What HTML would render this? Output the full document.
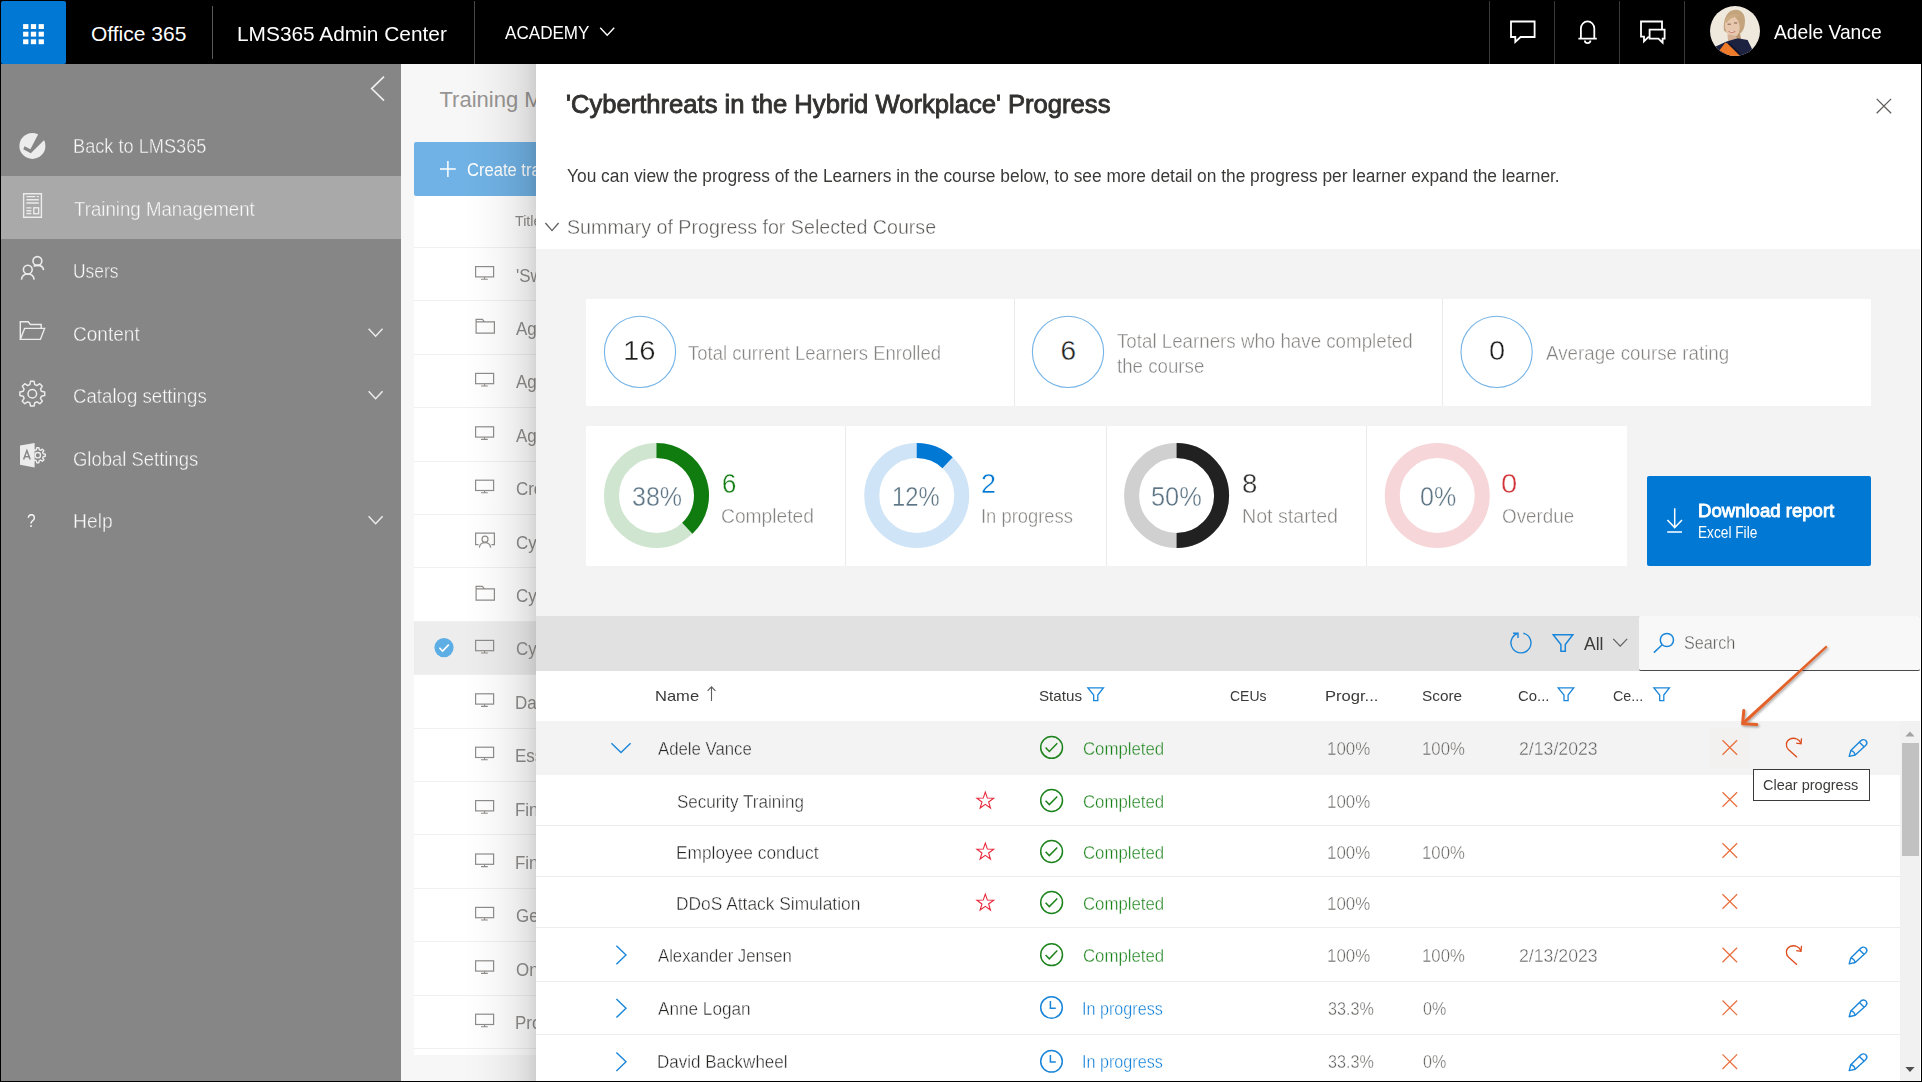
<!DOCTYPE html>
<html><head><meta charset="utf-8"><title>LMS365 Admin Center - Progress</title>
<style>
*{box-sizing:border-box}
html,body{margin:0;padding:0;background:#000;overflow:hidden}
#root{position:absolute;left:0;top:0;width:1922px;height:1082px;overflow:hidden;background:#000;font-family:"Liberation Sans",sans-serif}
#root div,#root span,#root svg{position:absolute}
.t{white-space:pre;line-height:1;transform-origin:0 0}
svg{left:0;top:0;width:1922px;height:1082px;overflow:visible}
</style></head>
<body><div id="root">
<!-- top bar -->
<div style="left:0px;top:0px;width:1922px;height:64px;background:#000;"></div>
<div style="left:1px;top:1px;width:65px;height:63px;background:#0078d4;border-radius:2px"></div>
<!-- sidebar -->
<div style="left:1px;top:64px;width:400px;height:1017px;background:#868686;"></div>
<div style="left:1px;top:176px;width:400px;height:63px;background:#a9a9a9;"></div>
<!-- background page (dimmed, under panel) -->
<div style="left:401px;top:64px;width:1520px;height:1017px;background:#f7f7f7;"></div>
<div style="left:414px;top:196px;width:1507px;height:859px;background:#ffffff;"></div>
<div style="left:414px;top:141.5px;width:1507px;height:54.5px;background:#70b2e5;border-radius:2px 0 0 2px"></div>
<div style="left:414px;top:621px;width:1507px;height:53px;background:#ededed;"></div>
<div style="left:414px;top:247px;width:1507px;height:1px;background:#f0f0f0;"></div>
<div style="left:414px;top:300px;width:1507px;height:1px;background:#f0f0f0;"></div>
<div style="left:414px;top:354px;width:1507px;height:1px;background:#f0f0f0;"></div>
<div style="left:414px;top:407px;width:1507px;height:1px;background:#f0f0f0;"></div>
<div style="left:414px;top:461px;width:1507px;height:1px;background:#f0f0f0;"></div>
<div style="left:414px;top:514px;width:1507px;height:1px;background:#f0f0f0;"></div>
<div style="left:414px;top:567px;width:1507px;height:1px;background:#f0f0f0;"></div>
<div style="left:414px;top:621px;width:1507px;height:1px;background:#f0f0f0;"></div>
<div style="left:414px;top:674px;width:1507px;height:1px;background:#f0f0f0;"></div>
<div style="left:414px;top:728px;width:1507px;height:1px;background:#f0f0f0;"></div>
<div style="left:414px;top:781px;width:1507px;height:1px;background:#f0f0f0;"></div>
<div style="left:414px;top:834px;width:1507px;height:1px;background:#f0f0f0;"></div>
<div style="left:414px;top:888px;width:1507px;height:1px;background:#f0f0f0;"></div>
<div style="left:414px;top:941px;width:1507px;height:1px;background:#f0f0f0;"></div>
<div style="left:414px;top:995px;width:1507px;height:1px;background:#f0f0f0;"></div>
<div style="left:414px;top:1048px;width:1507px;height:1px;background:#f0f0f0;"></div>
<svg viewBox="0 0 1922 1082">
<rect x="23.10" y="24.10" width="5.3" height="4.9" fill="#fff"/>
<rect x="30.85" y="24.10" width="5.3" height="4.9" fill="#fff"/>
<rect x="38.60" y="24.10" width="5.3" height="4.9" fill="#fff"/>
<rect x="23.10" y="31.70" width="5.3" height="4.9" fill="#fff"/>
<rect x="30.85" y="31.70" width="5.3" height="4.9" fill="#fff"/>
<rect x="38.60" y="31.70" width="5.3" height="4.9" fill="#fff"/>
<rect x="23.10" y="39.30" width="5.3" height="4.9" fill="#fff"/>
<rect x="30.85" y="39.30" width="5.3" height="4.9" fill="#fff"/>
<rect x="38.60" y="39.30" width="5.3" height="4.9" fill="#fff"/>
<path d="M212.5,6 V59" stroke="#5a5a5a" stroke-width="1"/>
<path d="M474.5,1 V64" stroke="#484848" stroke-width="1"/>
<path d="M1489.5,1 V64" stroke="#3a3a3a" stroke-width="1"/>
<path d="M1554.5,1 V64" stroke="#3a3a3a" stroke-width="1"/>
<path d="M1619.5,1 V64" stroke="#3a3a3a" stroke-width="1"/>
<path d="M1684.5,1 V64" stroke="#3a3a3a" stroke-width="1"/>
<polyline points="600.2,27.7 607.2,35.2 614.2,27.7" fill="none" stroke="#fff" stroke-width="1.4"/>
<path d="M1511,21.5 H1534.6 V37 H1520.6 L1515.3,42 V37 H1511 Z" fill="none" stroke="#fff" stroke-width="1.8" stroke-linejoin="miter"/>
<path d="M1578.4,38.6 H1596.8 M1580.9,38.6 V28.6 a6.7,7.2 0 0 1 13.4,0 V38.6 M1584.8,40.6 a2.8,2.6 0 0 0 5.6,0" fill="none" stroke="#fff" stroke-width="1.8"/>
<path d="M1662,29 V21.5 H1641 V36.6 H1644 V41.4 L1648.8,36.6" fill="none" stroke="#fff" stroke-width="1.8" stroke-linejoin="miter"/>
<path d="M1649.6,29.6 H1664.6 V38.6 H1662.6 V42.6 L1658.4,38.6 H1649.6 Z" fill="none" stroke="#fff" stroke-width="1.8" stroke-linejoin="miter"/>
<defs><clipPath id="av"><circle cx="25" cy="25.2" r="25"/></clipPath>
<filter id="avb" x="-10%" y="-10%" width="120%" height="120%"><feGaussianBlur stdDeviation="0.75"/></filter></defs>
<g transform="translate(1710,5.8)" clip-path="url(#av)"><rect x="0" y="0" width="50" height="51" fill="#efe8dd"/>
<g filter="url(#avb)">
<path d="M14,25 C12.6,13 17.5,4 25.6,4 C33.2,4 36.2,11 34.6,19.5 C33.8,24 32,27.6 28.6,28.2 L20,29 Z" fill="#c3a47d"/>
<path d="M24,31 L30,27 L31,34 Z" fill="#b9966e"/>
<ellipse cx="22.3" cy="20.6" rx="7.3" ry="10.6" transform="rotate(-10 22.3 20.6)" fill="#e7c8ae"/>
<path d="M15.2,15 C17,8.6 25,6.4 31,10.5 C27,10.2 20.5,11.2 16.4,17.5 Z" fill="#cbab82"/>
<path d="M17.4,28.4 L25.8,30 L27.4,36.5 L18.4,38.5 Z" fill="#d6b296"/>
<path d="M17.6,18.4 h3.2 M24,17.2 h3.2" stroke="#7c5c46" stroke-width="1"/>
<path d="M18.6,25.4 q3.4,2.6 6.6,0" stroke="#c88474" stroke-width="1.1" fill="#f7eee9"/>
<path d="M3,42 L16.6,35.8 L27.6,32.4 L37.6,34.2 L42.4,44 L40,52 L3,52 Z" fill="#1b2140"/>
<path d="M15.4,36.8 L19,38.4 L30.8,49.8 L22,51.6 L9.4,44.6 Z" fill="#ee7a2a"/>
<path d="M18.6,37.6 L31.2,50" stroke="#14152a" stroke-width="1.7"/>
</g></g>
<polyline points="384,76.6 371.6,88.6 384,100.6" fill="none" stroke="#f0f0f0" stroke-width="1.6"/>
<circle cx="32.4" cy="145.9" r="13" fill="#ececec"/>
<polygon points="24.6,146.2 30.4,149.3 39.6,131.6 48,136.2 30.8,153.3 23.3,149.3" fill="#868686"/>
<path d="M23.6,193.8 H41.4 V217.2 H23.6 Z M26.4,196.6 H35.4 M36.8,196.6 H38.8 M26.4,199.8 H38.8 M26.4,203 H38.8 M26.4,207.9 H31.4 M26.4,210.7 H31.4 M26.4,213.5 H31.4" fill="none" stroke="#ececec" stroke-width="1.4"/>
<rect x="33.8" y="207.8" width="4.8" height="5.9" fill="none" stroke="#ececec" stroke-width="1.4"/>
<circle cx="27.8" cy="269.6" r="4.4" fill="none" stroke="#ececec" stroke-width="1.6"/>
<path d="M21.4,279.6 C22,275.6 24.6,274 27.8,274 C31,274 33.6,275.6 34.2,279.6" fill="none" stroke="#ececec" stroke-width="1.6"/>
<circle cx="37.4" cy="261" r="4.4" fill="none" stroke="#ececec" stroke-width="1.6"/>
<path d="M33.6,266.4 C34.8,265.7 36,265.4 37.4,265.4 C40.8,265.4 43.2,267.2 43.6,270.2" fill="none" stroke="#ececec" stroke-width="1.6"/>
<path d="M20.3,339.4 V321.8 H28.2 L30.4,324.5 H41.2 V328.4 M20.3,339.4 L24.6,328.4 H44.6 L40.4,339.4 Z" fill="none" stroke="#ececec" stroke-width="1.4" stroke-linejoin="miter"/>
<polyline points="368.6,328.7 375.6,336.2 382.6,328.7" fill="none" stroke="#ececec" stroke-width="1.5"/>
<polyline points="368.6,391.2 375.6,398.7 382.6,391.2" fill="none" stroke="#ececec" stroke-width="1.5"/>
<polyline points="368.6,516.2 375.6,523.7 382.6,516.2" fill="none" stroke="#ececec" stroke-width="1.5"/>
<path d="M44.68,391.94 L44.68,395.46 L41.36,396.19 L40.47,398.34 L42.30,401.21 L39.81,403.70 L36.94,401.87 L34.79,402.76 L34.06,406.08 L30.54,406.08 L29.81,402.76 L27.66,401.87 L24.79,403.70 L22.30,401.21 L24.13,398.34 L23.24,396.19 L19.92,395.46 L19.92,391.94 L23.24,391.21 L24.13,389.06 L22.30,386.19 L24.79,383.70 L27.66,385.53 L29.81,384.64 L30.54,381.32 L34.06,381.32 L34.79,384.64 L36.94,385.53 L39.81,383.70 L42.30,386.19 L40.47,389.06 L41.36,391.21 Z" fill="none" stroke="#ececec" stroke-width="1.5" stroke-linejoin="round"/>
<circle cx="32.3" cy="393.7" r="4.3" fill="none" stroke="#ececec" stroke-width="1.5"/>
<path d="M45.32,454.13 L45.32,456.27 L43.20,456.69 L42.67,457.97 L43.88,459.76 L42.36,461.28 L40.57,460.07 L39.29,460.60 L38.87,462.72 L36.73,462.72 L36.31,460.60 L35.03,460.07 L33.24,461.28 L31.72,459.76 L32.93,457.97 L32.40,456.69 L30.28,456.27 L30.28,454.13 L32.40,453.71 L32.93,452.43 L31.72,450.64 L33.24,449.12 L35.03,450.33 L36.31,449.80 L36.73,447.68 L38.87,447.68 L39.29,449.80 L40.57,450.33 L42.36,449.12 L43.88,450.64 L42.67,452.43 L43.20,453.71 Z" fill="none" stroke="#ececec" stroke-width="1.4" stroke-linejoin="round"/>
<circle cx="37.8" cy="455.2" r="2.7" fill="none" stroke="#ececec" stroke-width="1.4"/>
<path d="M20,445.6 L34.6,443 V467.6 L20,464.8 Z" fill="#ececec"/>
<path d="M23.6,459.6 L26.9,450.6 L30.2,459.6 M24.8,456.8 H29" fill="none" stroke="#868686" stroke-width="1.5"/>
<path d="M440,169 H455.8 M447.9,161.1 V176.9" stroke="#fff" stroke-width="1.5"/>
<rect x="475.6" y="266.6" width="18" height="10.3" fill="none" stroke="#8f8d8b" stroke-width="1.2"/><path d="M484.6,277.0 V279.1 M481,279.2 H487.8" fill="none" stroke="#8f8d8b" stroke-width="1.1"/>
<path d="M476.1,333.2 V319.4 H482.5 L484.4,321.9 H494.4 V333.2 Z M476.1,321.9 H484" fill="none" stroke="#8f8d8b" stroke-width="1.2"/>
<rect x="475.6" y="373.4" width="18" height="10.3" fill="none" stroke="#8f8d8b" stroke-width="1.2"/><path d="M484.6,383.8 V385.9 M481,386.0 H487.8" fill="none" stroke="#8f8d8b" stroke-width="1.1"/>
<rect x="475.6" y="426.8" width="18" height="10.3" fill="none" stroke="#8f8d8b" stroke-width="1.2"/><path d="M484.6,437.2 V439.3 M481,439.4 H487.8" fill="none" stroke="#8f8d8b" stroke-width="1.1"/>
<rect x="475.6" y="480.2" width="18" height="10.3" fill="none" stroke="#8f8d8b" stroke-width="1.2"/><path d="M484.6,490.6 V492.7 M481,492.8 H487.8" fill="none" stroke="#8f8d8b" stroke-width="1.1"/>
<path d="M478.5,544.6 H475.6 V533.2 H494.4 V544.6 H491.5" fill="none" stroke="#8f8d8b" stroke-width="1.2"/><circle cx="485" cy="539.2" r="3" fill="none" stroke="#8f8d8b" stroke-width="1.2"/><path d="M479.3,547.6 C479.8,544.1 482,542.6 485,542.6 C488,542.6 490.2,544.1 490.7,547.6" fill="none" stroke="#8f8d8b" stroke-width="1.2"/>
<path d="M476.1,600.2 V586.4 H482.5 L484.4,588.9 H494.4 V600.2 Z M476.1,588.9 H484" fill="none" stroke="#8f8d8b" stroke-width="1.2"/>
<rect x="475.6" y="640.4" width="18" height="10.3" fill="none" stroke="#8f8d8b" stroke-width="1.2"/><path d="M484.6,650.8 V652.9 M481,653.0 H487.8" fill="none" stroke="#8f8d8b" stroke-width="1.1"/>
<rect x="475.6" y="693.8" width="18" height="10.3" fill="none" stroke="#8f8d8b" stroke-width="1.2"/><path d="M484.6,704.2 V706.3 M481,706.4 H487.8" fill="none" stroke="#8f8d8b" stroke-width="1.1"/>
<rect x="475.6" y="747.2" width="18" height="10.3" fill="none" stroke="#8f8d8b" stroke-width="1.2"/><path d="M484.6,757.6 V759.7 M481,759.8 H487.8" fill="none" stroke="#8f8d8b" stroke-width="1.1"/>
<rect x="475.6" y="800.6" width="18" height="10.3" fill="none" stroke="#8f8d8b" stroke-width="1.2"/><path d="M484.6,811.0 V813.1 M481,813.2 H487.8" fill="none" stroke="#8f8d8b" stroke-width="1.1"/>
<rect x="475.6" y="854.0" width="18" height="10.3" fill="none" stroke="#8f8d8b" stroke-width="1.2"/><path d="M484.6,864.4 V866.5 M481,866.6 H487.8" fill="none" stroke="#8f8d8b" stroke-width="1.1"/>
<rect x="475.6" y="907.4" width="18" height="10.3" fill="none" stroke="#8f8d8b" stroke-width="1.2"/><path d="M484.6,917.8 V919.9 M481,920.0 H487.8" fill="none" stroke="#8f8d8b" stroke-width="1.1"/>
<rect x="475.6" y="960.8" width="18" height="10.3" fill="none" stroke="#8f8d8b" stroke-width="1.2"/><path d="M484.6,971.2 V973.3 M481,973.4 H487.8" fill="none" stroke="#8f8d8b" stroke-width="1.1"/>
<rect x="475.6" y="1014.2" width="18" height="10.3" fill="none" stroke="#8f8d8b" stroke-width="1.2"/><path d="M484.6,1024.6 V1026.7 M481,1026.8 H487.8" fill="none" stroke="#8f8d8b" stroke-width="1.1"/>
<circle cx="444" cy="647.6" r="9.6" fill="#5eaee6"/>
<polyline points="439.4,647.8 442.6,651 448.8,644.6" fill="none" stroke="#fff" stroke-width="1.6"/>
</svg>
<span class="t" style="left:91.00px;top:23.22px;font-size:21px;color:#ffffff;">Office 365</span>
<span class="t" style="left:237.01px;top:22.97px;font-size:21px;color:#ffffff;transform:scaleX(0.9932);">LMS365 Admin Center</span>
<span class="t" style="left:504.50px;top:23.51px;font-size:18px;color:#ffffff;transform:scaleX(0.9493);">ACADEMY</span>
<span class="t" style="left:1774.00px;top:21.47px;font-size:21px;color:#ffffff;transform:scaleX(0.9157);">Adele Vance</span>
<span class="t" style="left:72.89px;top:135.87px;font-size:20px;color:#fafafa;-webkit-text-stroke:0.4px #868686;transform:scaleX(0.9092);">Back to LMS365</span>
<span class="t" style="left:73.80px;top:199.07px;font-size:20px;color:#fafafa;-webkit-text-stroke:0.4px #a9a9a9;transform:scaleX(0.9328);">Training Management</span>
<span class="t" style="left:72.93px;top:261.07px;font-size:20px;color:#fafafa;-webkit-text-stroke:0.4px #868686;transform:scaleX(0.8706);">Users</span>
<span class="t" style="left:72.85px;top:323.67px;font-size:20px;color:#fafafa;-webkit-text-stroke:0.4px #868686;transform:scaleX(0.9526);">Content</span>
<span class="t" style="left:72.87px;top:386.07px;font-size:20px;color:#fafafa;-webkit-text-stroke:0.4px #868686;transform:scaleX(0.9325);">Catalog settings</span>
<span class="t" style="left:72.88px;top:448.77px;font-size:20px;color:#fafafa;-webkit-text-stroke:0.4px #868686;transform:scaleX(0.9225);">Global Settings</span>
<span class="t" style="left:72.84px;top:510.87px;font-size:20px;color:#fafafa;-webkit-text-stroke:0.4px #868686;transform:scaleX(0.9648);">Help</span>
<span class="t" style="left:27.00px;top:511.76px;font-size:18px;color:#fafafa;transform:scaleX(0.8600);">?</span>
<span class="t" style="left:439.50px;top:89.13px;font-size:22px;color:#979593;">Training Management</span>
<span class="t" style="left:467.00px;top:160.51px;font-size:18px;color:#ffffff;transform:scaleX(0.9200);">Create training</span>
<span class="t" style="left:514.50px;top:213.30px;font-size:15px;color:#8f8d8b;transform:scaleX(0.9500);">Title</span>
<span class="t" style="left:515.75px;top:266.56px;font-size:18px;color:#8f8d8b;transform:scaleX(0.9400);">'Swi</span>
<span class="t" style="left:515.75px;top:319.96px;font-size:18px;color:#8f8d8b;transform:scaleX(0.9400);">Agi</span>
<span class="t" style="left:515.75px;top:373.36px;font-size:18px;color:#8f8d8b;transform:scaleX(0.9400);">Agi</span>
<span class="t" style="left:515.75px;top:426.76px;font-size:18px;color:#8f8d8b;transform:scaleX(0.9400);">Agi</span>
<span class="t" style="left:515.75px;top:480.16px;font-size:18px;color:#8f8d8b;transform:scaleX(0.9400);">Cre</span>
<span class="t" style="left:515.75px;top:533.56px;font-size:18px;color:#8f8d8b;transform:scaleX(0.9400);">Cyb</span>
<span class="t" style="left:515.75px;top:586.96px;font-size:18px;color:#8f8d8b;transform:scaleX(0.9400);">Cyb</span>
<span class="t" style="left:515.75px;top:640.36px;font-size:18px;color:#8f8d8b;transform:scaleX(0.9400);">Cyb</span>
<span class="t" style="left:514.81px;top:693.76px;font-size:18px;color:#8f8d8b;transform:scaleX(0.9400);">Dat</span>
<span class="t" style="left:514.81px;top:747.16px;font-size:18px;color:#8f8d8b;transform:scaleX(0.9400);">Ess</span>
<span class="t" style="left:514.81px;top:800.56px;font-size:18px;color:#8f8d8b;transform:scaleX(0.9400);">Fin</span>
<span class="t" style="left:514.81px;top:853.96px;font-size:18px;color:#8f8d8b;transform:scaleX(0.9400);">Fin</span>
<span class="t" style="left:515.75px;top:907.36px;font-size:18px;color:#8f8d8b;transform:scaleX(0.9400);">Gen</span>
<span class="t" style="left:515.75px;top:960.76px;font-size:18px;color:#8f8d8b;transform:scaleX(0.9400);">Onb</span>
<span class="t" style="left:514.81px;top:1014.16px;font-size:18px;color:#8f8d8b;transform:scaleX(0.9400);">Pro</span>
<!-- progress panel -->
<div style="left:462px;top:64px;width:74px;height:1017px;background:linear-gradient(to right,rgba(0,0,0,0) 0%,rgba(0,0,0,0.012) 25%,rgba(0,0,0,0.035) 50%,rgba(0,0,0,0.07) 72%,rgba(0,0,0,0.11) 88%,rgba(0,0,0,0.165) 100%)"></div>
<div style="left:536px;top:64px;width:1385px;height:1017px;background:#ffffff;"></div>
<div style="left:536px;top:249px;width:1384px;height:367px;background:#f3f3f3;"></div>
<div style="left:586px;top:299px;width:1285px;height:107px;background:#fff;"></div>
<div style="left:1014px;top:299px;width:1px;height:107px;background:#eaeaea;"></div>
<div style="left:1442px;top:299px;width:1px;height:107px;background:#eaeaea;"></div>
<div style="left:586px;top:426px;width:1041px;height:140px;background:#fff;"></div>
<div style="left:845px;top:426px;width:1px;height:140px;background:#eaeaea;"></div>
<div style="left:1106px;top:426px;width:1px;height:140px;background:#eaeaea;"></div>
<div style="left:1366px;top:426px;width:1px;height:140px;background:#eaeaea;"></div>
<div style="left:1647px;top:476px;width:224px;height:90px;background:#0078d4;border-radius:2px"></div>
<div style="left:536px;top:616px;width:1384px;height:55px;background:#e1e1e1;"></div>
<div style="left:1639px;top:616px;width:280.5px;height:55px;background:#f8f8f8;border-bottom:1px solid #4a4a4a;border-radius:2px"></div>
<div style="left:536px;top:721px;width:1364px;height:54px;background:#f3f3f3;"></div>
<div style="left:1710px;top:728px;width:40px;height:40px;background:#f2f1f0;"></div>
<div style="left:536px;top:825px;width:1364px;height:1px;background:#ededed;"></div>
<div style="left:536px;top:876px;width:1364px;height:1px;background:#ededed;"></div>
<div style="left:536px;top:927px;width:1364px;height:1px;background:#ededed;"></div>
<div style="left:536px;top:981px;width:1364px;height:1px;background:#ededed;"></div>
<div style="left:536px;top:1034px;width:1364px;height:1px;background:#ededed;"></div>
<div style="left:1900px;top:721px;width:20px;height:360px;background:#f1f1f1;"></div>
<div style="left:1902px;top:743px;width:17px;height:113px;background:#c1c1c1;"></div>
<svg viewBox="0 0 1922 1082">
<path d="M1876.7,98.9 L1891.1,113.3 M1891.1,98.9 L1876.7,113.3" stroke="#605e5c" stroke-width="1.3"/>
<polyline points="545.4,223 552,230.6 558.6,223" fill="none" stroke="#605e5c" stroke-width="1.3"/>
<circle cx="640" cy="351.9" r="35.6" fill="none" stroke="#74b3e6" stroke-width="1.1"/>
<circle cx="1068" cy="351.9" r="35.6" fill="none" stroke="#74b3e6" stroke-width="1.1"/>
<circle cx="1496.6" cy="351.9" r="35.6" fill="none" stroke="#74b3e6" stroke-width="1.1"/>
<circle cx="656.5" cy="495.5" r="45" fill="none" stroke="#cfe5cf" stroke-width="15"/><path d="M656.5,450.5 A45,45 0 0 1 687.30,528.30" fill="none" stroke="#107c10" stroke-width="15"/>
<circle cx="916.75" cy="495.5" r="45" fill="none" stroke="#cfe4f6" stroke-width="15"/><path d="M916.75,450.5 A45,45 0 0 1 947.55,462.70" fill="none" stroke="#0078d4" stroke-width="15"/>
<circle cx="1176.6" cy="495.5" r="45" fill="none" stroke="#d0d0d0" stroke-width="15"/><path d="M1176.6,450.5 A45,45 0 0 1 1176.60,540.50" fill="none" stroke="#212121" stroke-width="15"/>
<circle cx="1437.25" cy="495.5" r="45" fill="none" stroke="#f6d6d8" stroke-width="15"/>
<path d="M1674.7,508.2 V527.6 M1667.4,520 L1674.7,527.6 L1682,520 M1667.2,532 H1682" fill="none" stroke="#fff" stroke-width="1.5"/>
<path d="M1523.4,633.2 A10,10 0 1 1 1517.5,633.5" fill="none" stroke="#1a86d9" stroke-width="1.4"/>
<polyline points="1513,633.3 1518,633.3 1518,638" fill="none" stroke="#1a86d9" stroke-width="1.4"/>
<path d="M1553.2,634.7 H1572.8 L1565.3,644.5 V651.3 H1560.9 V644.5 Z" fill="none" stroke="#1a86d9" stroke-width="1.5"/>
<polyline points="1613.2,638.9 1620.2,646.2 1627.2,638.9" fill="none" stroke="#605e5c" stroke-width="1.2"/>
<circle cx="1666.9" cy="640" r="6.6" fill="none" stroke="#1a86d9" stroke-width="1.5"/>
<path d="M1662.2,644.8 L1653.9,652.6" stroke="#1a86d9" stroke-width="1.5"/>
<path d="M711.5,686.8 V701 M707.6,690.8 L711.5,686.8 L715.4,690.8" fill="none" stroke="#605e5c" stroke-width="1.1"/>
<path d="M1087.9,687.9 H1103.4 L1097.8,695.0 V700.5999999999999 H1093.7 V695.0 Z" fill="none" stroke="#1a86d9" stroke-width="1.3" stroke-linejoin="miter"/>
<path d="M1558.2,687.9 H1573.7 L1568.1,695.0 V700.5999999999999 H1564.0 V695.0 Z" fill="none" stroke="#1a86d9" stroke-width="1.3" stroke-linejoin="miter"/>
<path d="M1653.9,687.9 H1669.4 L1663.8,695.0 V700.5999999999999 H1659.7 V695.0 Z" fill="none" stroke="#1a86d9" stroke-width="1.3" stroke-linejoin="miter"/>
<polyline points="611.4,743.3 621,752.5 630.6,743.3" fill="none" stroke="#1a86d9" stroke-width="1.4"/>
<polyline points="616.4,945.7 626,955 616.4,964.3" fill="none" stroke="#1a86d9" stroke-width="1.4"/>
<polyline points="616.4,999.0 626,1008.3 616.4,1017.5999999999999" fill="none" stroke="#1a86d9" stroke-width="1.4"/>
<polyline points="616.4,1052.4 626,1061.7 616.4,1071.0" fill="none" stroke="#1a86d9" stroke-width="1.4"/>
<polygon points="985.30,792.10 987.36,798.07 993.67,798.18 988.63,801.98 990.47,808.02 985.30,804.40 980.13,808.02 981.97,801.98 976.93,798.18 983.24,798.07" fill="none" stroke="#e8283a" stroke-width="1.1" stroke-linejoin="miter"/>
<polygon points="985.30,843.10 987.36,849.07 993.67,849.18 988.63,852.98 990.47,859.02 985.30,855.40 980.13,859.02 981.97,852.98 976.93,849.18 983.24,849.07" fill="none" stroke="#e8283a" stroke-width="1.1" stroke-linejoin="miter"/>
<polygon points="985.30,894.10 987.36,900.07 993.67,900.18 988.63,903.98 990.47,910.02 985.30,906.40 980.13,910.02 981.97,903.98 976.93,900.18 983.24,900.07" fill="none" stroke="#e8283a" stroke-width="1.1" stroke-linejoin="miter"/>
<circle cx="1051.6" cy="747.4" r="10.9" fill="none" stroke="#1d831d" stroke-width="1.5"/>
<polyline points="1045.6,747.6 1049.3,751.5 1057.3,743.3" fill="none" stroke="#1d831d" stroke-width="1.5"/>
<circle cx="1051.6" cy="800.5" r="10.9" fill="none" stroke="#1d831d" stroke-width="1.5"/>
<polyline points="1045.6,800.7 1049.3,804.6 1057.3,796.4" fill="none" stroke="#1d831d" stroke-width="1.5"/>
<circle cx="1051.6" cy="851.5" r="10.9" fill="none" stroke="#1d831d" stroke-width="1.5"/>
<polyline points="1045.6,851.7 1049.3,855.6 1057.3,847.4" fill="none" stroke="#1d831d" stroke-width="1.5"/>
<circle cx="1051.6" cy="902.5" r="10.9" fill="none" stroke="#1d831d" stroke-width="1.5"/>
<polyline points="1045.6,902.7 1049.3,906.6 1057.3,898.4" fill="none" stroke="#1d831d" stroke-width="1.5"/>
<circle cx="1051.6" cy="954.7" r="10.9" fill="none" stroke="#1d831d" stroke-width="1.5"/>
<polyline points="1045.6,954.9000000000001 1049.3,958.8000000000001 1057.3,950.6" fill="none" stroke="#1d831d" stroke-width="1.5"/>
<circle cx="1051.5" cy="1007.5" r="10.8" fill="none" stroke="#1a86d9" stroke-width="1.5"/>
<polyline points="1050.4,1001.1 1050.4,1008.3 1055.8,1008.3" fill="none" stroke="#1a86d9" stroke-width="1.5"/>
<circle cx="1051.5" cy="1061.3" r="10.8" fill="none" stroke="#1a86d9" stroke-width="1.5"/>
<polyline points="1050.4,1054.8999999999999 1050.4,1062.1 1055.8,1062.1" fill="none" stroke="#1a86d9" stroke-width="1.5"/>
<path d="M1722.5,740.2 L1737.1,754.8 M1737.1,740.2 L1722.5,754.8" stroke="#e9703e" stroke-width="1.25"/>
<path d="M1722.5,792.2 L1737.1,806.8 M1737.1,792.2 L1722.5,806.8" stroke="#e9703e" stroke-width="1.25"/>
<path d="M1722.5,843.2 L1737.1,857.8 M1737.1,843.2 L1722.5,857.8" stroke="#e9703e" stroke-width="1.25"/>
<path d="M1722.5,894.2 L1737.1,908.8 M1737.1,894.2 L1722.5,908.8" stroke="#e9703e" stroke-width="1.25"/>
<path d="M1722.5,947.7 L1737.1,962.3 M1737.1,947.7 L1722.5,962.3" stroke="#e9703e" stroke-width="1.25"/>
<path d="M1722.5,1000.5 L1737.1,1015.0999999999999 M1737.1,1000.5 L1722.5,1015.0999999999999" stroke="#e9703e" stroke-width="1.25"/>
<path d="M1722.5,1054.4 L1737.1,1069.0 M1737.1,1054.4 L1722.5,1069.0" stroke="#e9703e" stroke-width="1.25"/>
<path d="M1797,757.3 L1788.4,749.6 C1785.2,746.4 1785.8,741.2 1789.8,739.2 C1794.6,736.8 1800,739.6 1800.8,743.6" fill="none" stroke="#dc4b1c" stroke-width="1.3"/>
<polyline points="1801.5,738.4 1801,743.8 1796.2,743.2" fill="none" stroke="#dc4b1c" stroke-width="1.3"/>
<path d="M1797,964.8 L1788.4,957.1 C1785.2,953.9 1785.8,948.7 1789.8,946.7 C1794.6,944.3 1800,947.1 1800.8,951.1" fill="none" stroke="#dc4b1c" stroke-width="1.3"/>
<polyline points="1801.5,945.9 1801,951.3 1796.2,950.7" fill="none" stroke="#dc4b1c" stroke-width="1.3"/>
<g transform="translate(0,0.0)" fill="none" stroke="#1a86d9" stroke-width="1.4" stroke-linejoin="round"><path d="M1849.2,756.4 L1850.8,750.6 L1861,740.6 C1862.6,739.2 1864.8,739.4 1866,740.8 C1867.2,742.2 1867,744.2 1865.6,745.6 L1855.2,755 Z"/><path d="M1850.8,750.6 C1853.2,751 1854.6,752.6 1855.2,755 M1859.4,742.2 L1864,746.8"/></g>
<g transform="translate(0,207.5)" fill="none" stroke="#1a86d9" stroke-width="1.4" stroke-linejoin="round"><path d="M1849.2,756.4 L1850.8,750.6 L1861,740.6 C1862.6,739.2 1864.8,739.4 1866,740.8 C1867.2,742.2 1867,744.2 1865.6,745.6 L1855.2,755 Z"/><path d="M1850.8,750.6 C1853.2,751 1854.6,752.6 1855.2,755 M1859.4,742.2 L1864,746.8"/></g>
<g transform="translate(0,260.29999999999995)" fill="none" stroke="#1a86d9" stroke-width="1.4" stroke-linejoin="round"><path d="M1849.2,756.4 L1850.8,750.6 L1861,740.6 C1862.6,739.2 1864.8,739.4 1866,740.8 C1867.2,742.2 1867,744.2 1865.6,745.6 L1855.2,755 Z"/><path d="M1850.8,750.6 C1853.2,751 1854.6,752.6 1855.2,755 M1859.4,742.2 L1864,746.8"/></g>
<g transform="translate(0,314.20000000000005)" fill="none" stroke="#1a86d9" stroke-width="1.4" stroke-linejoin="round"><path d="M1849.2,756.4 L1850.8,750.6 L1861,740.6 C1862.6,739.2 1864.8,739.4 1866,740.8 C1867.2,742.2 1867,744.2 1865.6,745.6 L1855.2,755 Z"/><path d="M1850.8,750.6 C1853.2,751 1854.6,752.6 1855.2,755 M1859.4,742.2 L1864,746.8"/></g>
</svg>
<span class="t" style="left:565.78px;top:91.84px;font-size:25px;color:#323130;-webkit-text-stroke:0.85px #323130;transform:scaleX(1.0243);">'Cyberthreats in the Hybrid Workplace' Progress</span>
<span class="t" style="left:566.80px;top:167.36px;font-size:18px;color:#3b3a39;transform:scaleX(0.9638);">You can view the progress of the Learners in the course below, to see more detail on the progress per learner expand the learner.</span>
<span class="t" style="left:566.80px;top:215.52px;font-size:21px;color:#5c5a58;-webkit-text-stroke:0.4px #ffffff;transform:scaleX(0.9357);">Summary of Progress for Selected Course</span>
<span class="t" style="left:623.11px;top:337.00px;font-size:28px;color:#201f1e;-webkit-text-stroke:0.4px #ffffff;transform:scaleX(1.0465);">16</span>
<span class="t" style="left:688.20px;top:343.07px;font-size:20px;color:#858381;-webkit-text-stroke:0.4px #ffffff;transform:scaleX(0.9253);">Total current Learners Enrolled</span>
<span class="t" style="left:1060.40px;top:337.00px;font-size:28px;color:#201f1e;-webkit-text-stroke:0.4px #ffffff;">6</span>
<span class="t" style="left:1116.80px;top:330.67px;font-size:20px;color:#858381;-webkit-text-stroke:0.4px #ffffff;transform:scaleX(0.9364);">Total Learners who have completed</span>
<span class="t" style="left:1116.80px;top:356.07px;font-size:20px;color:#858381;-webkit-text-stroke:0.4px #ffffff;transform:scaleX(0.9350);">the course</span>
<span class="t" style="left:1488.66px;top:337.00px;font-size:28px;color:#201f1e;-webkit-text-stroke:0.4px #ffffff;transform:scaleX(1.0357);">0</span>
<span class="t" style="left:1546.10px;top:343.07px;font-size:20px;color:#858381;-webkit-text-stroke:0.4px #ffffff;transform:scaleX(0.9378);">Average course rating</span>
<span class="t" style="left:631.81px;top:482.80px;font-size:28px;color:#5d7585;-webkit-text-stroke:0.4px #ffffff;transform:scaleX(0.8939);">38%</span>
<span class="t" style="left:721.68px;top:469.50px;font-size:28px;color:#107c10;-webkit-text-stroke:0.4px #ffffff;transform:scaleX(0.9214);">6</span>
<span class="t" style="left:720.74px;top:505.77px;font-size:20px;color:#858381;-webkit-text-stroke:0.4px #ffffff;transform:scaleX(0.9609);">Completed</span>
<span class="t" style="left:892.30px;top:482.80px;font-size:28px;color:#5d7585;-webkit-text-stroke:0.4px #ffffff;transform:scaleX(0.8486);">12%</span>
<span class="t" style="left:981.14px;top:469.50px;font-size:28px;color:#0078d4;-webkit-text-stroke:0.4px #ffffff;transform:scaleX(0.9643);">2</span>
<span class="t" style="left:981.18px;top:505.77px;font-size:20px;color:#858381;-webkit-text-stroke:0.4px #ffffff;transform:scaleX(0.9187);">In progress</span>
<span class="t" style="left:1151.29px;top:482.80px;font-size:28px;color:#5d7585;-webkit-text-stroke:0.4px #ffffff;transform:scaleX(0.9068);">50%</span>
<span class="t" style="left:1241.81px;top:469.50px;font-size:28px;color:#323130;-webkit-text-stroke:0.4px #ffffff;transform:scaleX(0.9857);">8</span>
<span class="t" style="left:1241.82px;top:505.77px;font-size:20px;color:#858381;-webkit-text-stroke:0.4px #ffffff;transform:scaleX(0.9812);">Not started</span>
<span class="t" style="left:1419.61px;top:482.80px;font-size:28px;color:#5d7585;-webkit-text-stroke:0.4px #ffffff;transform:scaleX(0.8944);">0%</span>
<span class="t" style="left:1501.36px;top:469.50px;font-size:28px;color:#d13438;-webkit-text-stroke:0.4px #ffffff;transform:scaleX(1.0429);">0</span>
<span class="t" style="left:1502.40px;top:505.77px;font-size:20px;color:#858381;-webkit-text-stroke:0.4px #ffffff;transform:scaleX(0.9414);">Overdue</span>
<span class="t" style="left:1697.77px;top:502.36px;font-size:18px;color:#ffffff;-webkit-text-stroke:0.85px #ffffff;transform:scaleX(1.0315);">Download report</span>
<span class="t" style="left:1697.95px;top:524.66px;font-size:16px;color:#ffffff;transform:scaleX(0.8546);">Excel File</span>
<span class="t" style="left:1583.50px;top:635.36px;font-size:18px;color:#3b3a39;transform:scaleX(0.9734);">All</span>
<span class="t" style="left:1684.00px;top:633.51px;font-size:18px;color:#5c5a58;-webkit-text-stroke:0.4px #f8f8f8;transform:scaleX(0.8997);">Search</span>
<span class="t" style="left:655.10px;top:687.80px;font-size:15px;color:#3b3a39;transform:scaleX(1.1016);">Name</span>
<span class="t" style="left:1039.00px;top:687.80px;font-size:15px;color:#3b3a39;transform:scaleX(1.0113);">Status</span>
<span class="t" style="left:1230.00px;top:687.80px;font-size:15px;color:#3b3a39;transform:scaleX(0.9310);">CEUs</span>
<span class="t" style="left:1324.70px;top:687.80px;font-size:15px;color:#3b3a39;transform:scaleX(1.1042);">Progr...</span>
<span class="t" style="left:1421.60px;top:687.80px;font-size:15px;color:#3b3a39;transform:scaleX(1.0221);">Score</span>
<span class="t" style="left:1517.50px;top:687.80px;font-size:15px;color:#3b3a39;transform:scaleX(0.9915);">Co...</span>
<span class="t" style="left:1613.40px;top:687.80px;font-size:15px;color:#3b3a39;transform:scaleX(0.9538);">Ce...</span>
<span class="t" style="left:657.90px;top:739.76px;font-size:18px;color:#262524;-webkit-text-stroke:0.4px #f3f3f3;transform:scaleX(0.9312);">Adele Vance</span>
<span class="t" style="left:1083.00px;top:739.76px;font-size:18px;color:#168016;-webkit-text-stroke:0.4px #f3f3f3;transform:scaleX(0.9322);">Completed</span>
<span class="t" style="left:1326.66px;top:739.76px;font-size:18px;color:#63615f;-webkit-text-stroke:0.4px #f3f3f3;transform:scaleX(0.9393);">100%</span>
<span class="t" style="left:1422.47px;top:739.76px;font-size:18px;color:#63615f;-webkit-text-stroke:0.4px #f3f3f3;transform:scaleX(0.9304);">100%</span>
<span class="t" style="left:1518.80px;top:739.76px;font-size:18px;color:#63615f;-webkit-text-stroke:0.4px #f3f3f3;transform:scaleX(0.9829);">2/13/2023</span>
<span class="t" style="left:676.70px;top:792.76px;font-size:18px;color:#262524;-webkit-text-stroke:0.4px #ffffff;transform:scaleX(0.9470);">Security Training</span>
<span class="t" style="left:1083.00px;top:792.76px;font-size:18px;color:#168016;-webkit-text-stroke:0.4px #ffffff;transform:scaleX(0.9322);">Completed</span>
<span class="t" style="left:1326.66px;top:792.76px;font-size:18px;color:#63615f;-webkit-text-stroke:0.4px #ffffff;transform:scaleX(0.9393);">100%</span>
<span class="t" style="left:675.74px;top:844.06px;font-size:18px;color:#262524;-webkit-text-stroke:0.4px #ffffff;transform:scaleX(0.9620);">Employee conduct</span>
<span class="t" style="left:1083.00px;top:844.06px;font-size:18px;color:#168016;-webkit-text-stroke:0.4px #ffffff;transform:scaleX(0.9322);">Completed</span>
<span class="t" style="left:1326.66px;top:844.06px;font-size:18px;color:#63615f;-webkit-text-stroke:0.4px #ffffff;transform:scaleX(0.9393);">100%</span>
<span class="t" style="left:1422.47px;top:844.06px;font-size:18px;color:#63615f;-webkit-text-stroke:0.4px #ffffff;transform:scaleX(0.9304);">100%</span>
<span class="t" style="left:675.74px;top:895.06px;font-size:18px;color:#262524;-webkit-text-stroke:0.4px #ffffff;transform:scaleX(0.9649);">DDoS Attack Simulation</span>
<span class="t" style="left:1083.00px;top:895.06px;font-size:18px;color:#168016;-webkit-text-stroke:0.4px #ffffff;transform:scaleX(0.9322);">Completed</span>
<span class="t" style="left:1326.66px;top:895.06px;font-size:18px;color:#63615f;-webkit-text-stroke:0.4px #ffffff;transform:scaleX(0.9393);">100%</span>
<span class="t" style="left:657.80px;top:946.76px;font-size:18px;color:#262524;-webkit-text-stroke:0.4px #ffffff;transform:scaleX(0.9281);">Alexander Jensen</span>
<span class="t" style="left:1083.00px;top:946.76px;font-size:18px;color:#168016;-webkit-text-stroke:0.4px #ffffff;transform:scaleX(0.9322);">Completed</span>
<span class="t" style="left:1326.66px;top:946.76px;font-size:18px;color:#63615f;-webkit-text-stroke:0.4px #ffffff;transform:scaleX(0.9393);">100%</span>
<span class="t" style="left:1422.47px;top:946.76px;font-size:18px;color:#63615f;-webkit-text-stroke:0.4px #ffffff;transform:scaleX(0.9304);">100%</span>
<span class="t" style="left:1518.80px;top:946.76px;font-size:18px;color:#63615f;-webkit-text-stroke:0.4px #ffffff;transform:scaleX(0.9829);">2/13/2023</span>
<span class="t" style="left:657.80px;top:1000.06px;font-size:18px;color:#262524;-webkit-text-stroke:0.4px #ffffff;transform:scaleX(0.9534);">Anne Logan</span>
<span class="t" style="left:1082.30px;top:1000.06px;font-size:18px;color:#0a7cd6;-webkit-text-stroke:0.4px #ffffff;transform:scaleX(0.8973);">In progress</span>
<span class="t" style="left:1327.60px;top:1000.06px;font-size:18px;color:#63615f;-webkit-text-stroke:0.4px #ffffff;transform:scaleX(0.8994);">33.3%</span>
<span class="t" style="left:1423.40px;top:1000.06px;font-size:18px;color:#63615f;-webkit-text-stroke:0.4px #ffffff;transform:scaleX(0.8958);">0%</span>
<span class="t" style="left:656.85px;top:1053.26px;font-size:18px;color:#262524;-webkit-text-stroke:0.4px #ffffff;transform:scaleX(0.9458);">David Backwheel</span>
<span class="t" style="left:1082.30px;top:1053.26px;font-size:18px;color:#0a7cd6;-webkit-text-stroke:0.4px #ffffff;transform:scaleX(0.8973);">In progress</span>
<span class="t" style="left:1327.60px;top:1053.26px;font-size:18px;color:#63615f;-webkit-text-stroke:0.4px #ffffff;transform:scaleX(0.8994);">33.3%</span>
<span class="t" style="left:1423.40px;top:1053.26px;font-size:18px;color:#63615f;-webkit-text-stroke:0.4px #ffffff;transform:scaleX(0.8958);">0%</span>
<div style="left:1753px;top:769px;width:117px;height:32px;background:#fff;border:1px solid #3a3a3a"></div>
<span class="t" style="left:1763.30px;top:777.00px;font-size:15px;color:#3b3a39;transform:scaleX(0.9676);">Clear progress</span>
<svg viewBox="0 0 1922 1082">
<defs><filter id="ash" x="-20%" y="-20%" width="140%" height="140%"><feDropShadow dx="1.2" dy="1.4" stdDeviation="0.9" flood-color="#000" flood-opacity="0.35"/></filter></defs>
<g filter="url(#ash)"><path d="M1827.54,647.21 L1826.06,645.59 L1742.12,722.02 L1744.28,724.38 Z" fill="#e2622c"/><path d="M1743.8,710.4 L1742.6,723.8 L1756.8,724.6" fill="none" stroke="#e2622c" stroke-width="3" stroke-linecap="round" stroke-linejoin="round"/></g>
<path d="M1905.4,736.4 L1910,731.4 L1914.6,736.4 Z" fill="#a3a3a3"/>
<path d="M1905.4,1067 L1910,1072 L1914.6,1067 Z" fill="#505050"/>
</svg>
<!-- window border -->
<div style="left:0;top:0;width:1922px;height:1px;background:#000"></div>
<div style="left:0;top:1081px;width:1922px;height:1px;background:#000"></div>
<div style="left:0;top:0;width:1px;height:1082px;background:#000"></div>
<div style="left:1921px;top:0;width:1px;height:1082px;background:#000"></div>
</div></body></html>
